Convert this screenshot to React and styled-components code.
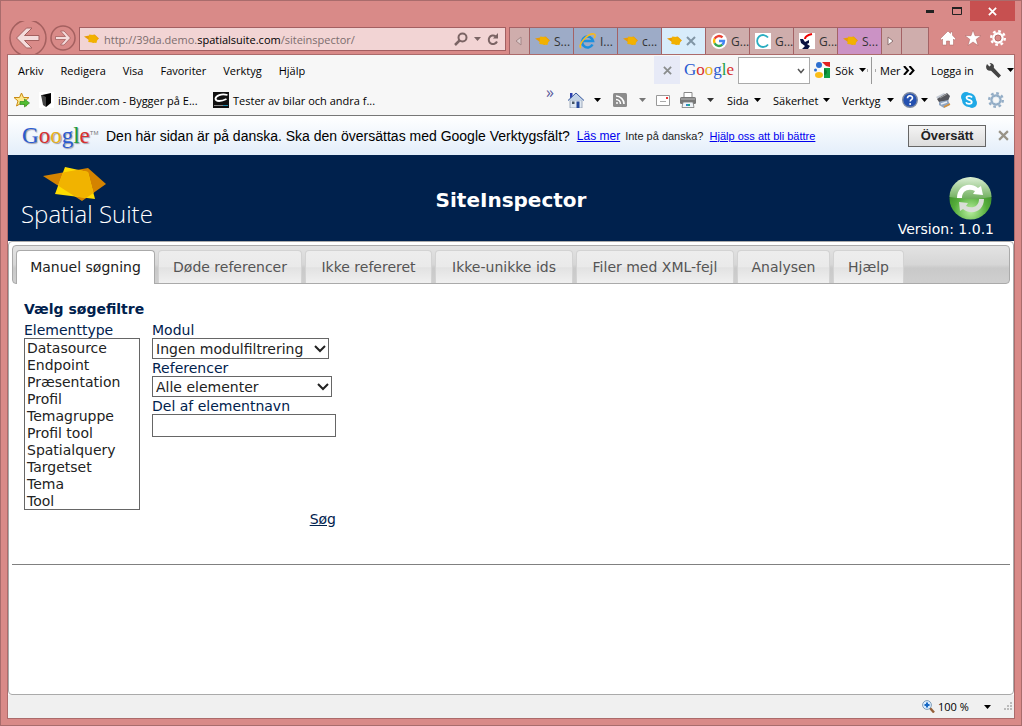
import React, { useState } from "react";
import styled, { createGlobalStyle, css } from "styled-components";

const GlobalStyle = createGlobalStyle`
  * {
    box-sizing: border-box;
  }

  body {
    margin: 0;
  }

  button,
  input,
  select {
    font: inherit;
    color: inherit;
    margin: 0;
  }

  svg {
    display: block;
    flex: none;
  }
`;

const uiFont = `"Open Sans", "Noto Sans", sans-serif`;
const pageFont = `"DejaVu Sans", sans-serif`;
const arial = `"Liberation Sans", Arial, sans-serif`;

const BrowserWindow = styled.div`
  display: flex;
  flex-direction: column;
  min-height: 100vh;
  border: 1px solid #a96c6c;
  background-color: #d98a88;
  font-family: ${uiFont};
  font-size: 11px;
  color: #000;
`;

const TitleBar = styled.div`
  display: flex;
  justify-content: flex-end;
  height: 20px;
  padding-right: 6px;
`;

const PlainButton = styled.button`
  display: flex;
  align-items: center;
  justify-content: center;
  flex: none;
  padding: 0;
  border: none;
  background: none;
  white-space: nowrap;
`;

const WindowButton = styled(PlainButton)`
  width: ${(props) => (props.$close ? 45 : 27)}px;
  background-color: ${(props) => (props.$close ? "#c75050" : "transparent")};
`;

const NavRow = styled.div`
  display: flex;
  align-items: flex-end;
  height: 33px;
  padding: 0 15px 0 8px;
  overflow: hidden;
`;

const HistoryButtons = styled.div`
  display: flex;
  align-items: center;
  gap: 3px;
  width: 70px;
  height: 33px;
`;

const AddressBar = styled.form`
  display: flex;
  align-items: center;
  flex: 1;
  min-width: 0;
  height: 24px;
  margin: 0 3px 3px 0;
  padding: 0 6px 0 4px;
  border: 1px solid #a35f61;
  background-color: #f2d4d4;
`;

const Address = styled.div`
  flex: 1;
  margin-left: 5px;
  font-size: 11px;
  color: #7c6d6d;
  white-space: nowrap;
  overflow: hidden;

  b {
    font-weight: 400;
    color: #000;
  }
`;

const AddressTools = styled.div`
  display: flex;
  align-items: center;
  gap: 6px;
`;

const TabStrip = styled.div`
  display: flex;
  height: 27px;
  border: 1px solid #a46265;
  border-bottom: none;
`;

const BrowserTab = styled.button`
  display: flex;
  align-items: center;
  gap: 4px;
  width: ${(props) => props.$width || 44}px;
  padding: 0 0 0 5px;
  border: none;
  border-right: 1px solid #a46265;
  background-color: ${(props) => props.$color || "#cfadac"};
  font-size: 12px;
  color: #333;
  white-space: nowrap;

  &:last-child {
    border-right: none;
  }
`;

const NavIcons = styled.div`
  display: flex;
  align-items: center;
  gap: 9px;
  height: 33px;
  margin-left: 11px;
`;

const Viewport = styled.div`
  display: flex;
  flex-direction: column;
  flex: 1;
  margin: 0 6px 6px 6px;
  border: 1px solid #ac6b6b;
  background-color: #fff;
`;

const BarRow = styled.div`
  display: flex;
  align-items: center;
  height: ${(props) => props.$height}px;
  padding-bottom: 2px;
  background-color: #f7f7f7;
`;

const MenuBar = styled.nav`
  display: flex;
  flex: 1;
  gap: 17px;
  padding-left: 10px;
`;

const Slot = styled.div`
  display: flex;
  align-items: center;
  justify-content: ${(props) => (props.$spread ? "space-between" : "flex-start")};
  flex: none;
  width: ${(props) => props.$width}px;
  white-space: nowrap;
`;

const CloseToolbar = styled(PlainButton)`
  width: 26px;
  height: 28px;
  margin-right: 4px;
  background-color: #e7eaf7;
`;

const SearchWrap = styled.div`
  position: relative;
  flex: none;
  width: 72px;
  margin-right: 4px;

  svg {
    position: absolute;
    top: 11px;
    right: 5px;
    pointer-events: none;
  }
`;

const SearchBox = styled.select`
  display: block;
  width: 100%;
  height: 27px;
  border: 1px solid #aaa;
  border-radius: 0;
  background-color: #fff;
  appearance: none;
`;

const Divider = styled.span`
  display: flex;
  align-items: center;
  justify-content: space-between;
  width: 9px;
  height: 27px;
  margin: 0 4px 0 1px;
  background: linear-gradient(#999, #999) center / 1px 100% no-repeat;

  &::before,
  &::after {
    content: "";
    width: 1px;
    height: 3px;
    background-color: #aaa;
  }
`;

const FavoriteLinks = styled.div`
  display: flex;
  align-items: center;
  flex: 1;
  padding-left: 6px;
`;

const FavoriteLink = styled.a`
  display: flex;
  align-items: center;
  gap: 4px;
  min-width: 165px;
  margin-left: 9px;
  color: #000;
  text-decoration: none;
  white-space: nowrap;
`;

const Chevrons = styled.span`
  align-self: flex-start;
  width: 22px;
  font-size: 16px;
  line-height: 10px;
  color: #5b5b9c;
`;

const GoogleWord = styled.span`
  flex: none;
  width: ${(props) => props.$width}px;
  font-family: "Liberation Serif", serif;
  font-size: ${(props) => props.$size}px;
  line-height: 26px;
  white-space: nowrap;
  ${(props) =>
    props.$shadow &&
    css`
      text-shadow: 1px 1px 1px #99a;
    `}

  sup {
    font-family: ${arial};
    font-size: 6px;
    line-height: 6px;
    color: #777;
    text-shadow: none;
    vertical-align: 8px;
  }
`;

const Letter = styled.span`
  color: ${(props) => props.$color};
`;

const TranslateBar = styled.div`
  display: flex;
  align-items: center;
  height: 40px;
  padding: 0 5px 0 14px;
  border-top: 1px solid #777;
  background: linear-gradient(#fff, #e3eefa);
  font-family: ${arial};
  font-size: 11px;
  color: #222;
  white-space: nowrap;
`;

const TranslateText = styled.span`
  margin-right: 7px;
  font-size: 14px;
  color: #000;
`;

const TranslateLink = styled.a`
  margin-right: 5px;
  font-size: ${(props) => props.$size}px;
  color: #00e;
`;

const TranslateButton = styled.button`
  width: 78px;
  height: 22px;
  margin: 0 12px 0 auto;
  padding: 0;
  border: 1px solid #666;
  background: linear-gradient(#f4f4f4, #dcdcdc);
  font-size: 13px;
  font-weight: 700;
  color: #222;
`;

const AppHeader = styled.header`
  display: grid;
  grid-template-columns: 1fr auto 1fr;
  align-items: center;
  height: 86px;
  background-color: #00214d;
  font-family: ${pageFont};
  color: #fff;
`;

const Logo = styled.div`
  padding: 0 0 4px 13px;
  font-family: "Open Sans", sans-serif;
  font-size: 24px;
  font-weight: 300;
  line-height: 24px;
  color: #fff;

  svg {
    margin-left: 22px;
  }
`;

const Title = styled.h1`
  margin: 0;
  padding-top: 3px;
  font-size: 20px;
  line-height: 24px;
`;

const Version = styled.div`
  display: flex;
  flex-direction: column;
  align-items: flex-end;
  padding: 17px 20px 0 0;
  font-size: 14px;
  line-height: 16px;

  button {
    margin: 0 2px 1px 0;
  }
`;

const Page = styled.main`
  display: flex;
  flex-direction: column;
  flex: 1;
  padding: 3px;
  border: 1px solid #aaa;
  border-radius: 4px;
  background-color: #fff;
  font-family: ${pageFont};
  font-size: 14px;
  color: #222;
`;

const Tabs = styled.div`
  display: flex;
  gap: 3px;
  height: 39px;
  padding: 4px 3px 0;
  border: 1px solid #aaa;
  border-radius: 4px;
  background: linear-gradient(#e3e3e3 0%, #d6d6d6 50%, #c9c9c9 60%, #cfcfcf 100%);
`;

const PageTab = styled.button`
  width: ${(props) => props.$width}px;
  padding: 0;
  border: 1px solid ${(props) => (props.$active ? "#aaa" : "#d3d3d3")};
  border-bottom: none;
  border-radius: 4px 4px 0 0;
  background: linear-gradient(#ededed 0%, #eaeaea 50%, #e2e2e2 52%, #f0f0f0 100%);
  color: #555;
  white-space: nowrap;

  ${(props) =>
    props.$active &&
    css`
      margin-bottom: -1px;
      padding-bottom: 1px;
      background: #fff;
      color: #212121;
    `}
`;

const FilterForm = styled.form`
  display: flex;
  flex-direction: column;
  width: 324px;
  padding: 15px 0 0 12px;
  color: #00214d;
`;

const Heading = styled.h2`
  margin: 0;
  font-size: 14px;
  line-height: 20px;
`;

const Columns = styled.div`
  display: flex;
  gap: 12px;
  padding-top: 2px;
`;

const Column = styled.div`
  display: flex;
  flex-direction: column;
  align-items: flex-start;
  flex: ${(props) => (props.$grow ? 1 : "none")};
`;

const FieldLabel = styled.label`
  height: 17px;
  line-height: 19px;
`;

const ListBox = styled.select`
  width: 116px;
  height: 172px;
  padding: 0;
  border: 1px solid #666;
  border-radius: 0;
  background-color: #fff;
  color: #222;
  overflow: hidden;

  option {
    height: 17px;
    min-height: 17px;
    padding: 1px 2px 0;
    line-height: 17px;
  }
`;

const SelectWrap = styled.div`
  position: relative;
  width: ${(props) => props.$width}px;

  svg {
    position: absolute;
    top: 7px;
    right: 3px;
    pointer-events: none;
  }
`;

const DropDown = styled.select`
  display: block;
  width: 100%;
  height: 21px;
  padding: 0 3px;
  border: 1px solid #666;
  border-radius: 0;
  background-color: #fff;
  color: #222;
  appearance: none;
`;

const TextInput = styled.input`
  width: 100%;
  height: 23px;
  padding: 0 3px;
  border: 1px solid #666;
`;

const SearchLink = styled.a`
  align-self: flex-end;
  line-height: 18px;
  color: #00214d;
`;

const Rule = styled.hr`
  width: 100%;
  margin: 36px 0 0;
  border: none;
  border-top: 1px solid #808080;
`;

const StatusBar = styled.footer`
  display: flex;
  align-items: center;
  justify-content: flex-end;
  height: 23px;
  padding-right: 1px;
  background-color: #f0f0f0;
`;

const Caret = ({ color = "#000" }) => (
  <svg width="7" height="4" viewBox="0 0 7 4">
    <path d="M0 0h7L3.500 4z" fill={color} />
  </svg>
);

const Cross = ({ size, color, weight = 2 }) => (
  <svg width={size} height={size} viewBox="0 0 10 10">
    <path d="M1 1l8 8M9 1L1 9" stroke={color} strokeWidth={weight} />
  </svg>
);

const SuiteIcon = () => (
  <svg width="15" height="10" viewBox="0 0 63 38">
    <path d="M0 9L45 0l18 17-24 19z" fill="#e89c08" />
    <path d="M22 0l23 3 13 14-6 19-34-4z" fill="#f2b100" />
  </svg>
);

// two overlapping sheets, the shared area in its own tone
const SuiteLogo = () => (
  <svg width="63" height="35" viewBox="0 0 63 35">
    <clipPath id="sheet">
      <path d="M0 9L45 1l18 16-24 17z" />
    </clipPath>
    <path d="M0 9L45 1l18 16-24 17z" fill="#d48300" />
    <path d="M22 0l23 5 7 27-40-5z" fill="#ffdc00" />
    <path d="M22 0l23 5 7 27-40-5z" fill="#f1b300" clipPath="url(#sheet)" />
  </svg>
);

const BackIcon = () => (
  <svg width="38" height="38" viewBox="0 0 38 38">
    <circle cx="19" cy="19" r="18" fill="none" stroke="#a4605f" strokeWidth="1.500" />
    <path
      d="M7.500 19L17.500 9h5.500l-7.500 7.500H30v5H15.500L23 29h-5.500z"
      fill="#f4dcdc"
      stroke="#a4605f"
    />
  </svg>
);

const ForwardIcon = () => (
  <svg width="26" height="26" viewBox="0 0 26 26">
    <circle cx="13" cy="13" r="12" fill="none" stroke="#a4605f" strokeWidth="1.500" />
    <path d="M20.500 13l-6.500-7h-3.500l5 5.500H5.500v3h10l-5 5.500H14z" fill="#f4dcdc" stroke="#a4605f" strokeWidth=".8" />
  </svg>
);

const GlassIcon = () => (
  <svg width="14" height="14" viewBox="0 0 14 14" fill="none" stroke="#7b6464">
    <circle cx="8.500" cy="5.500" r="4" strokeWidth="2" />
    <path d="M5.500 8.500L1 13" strokeWidth="2.500" />
  </svg>
);

const ReloadIcon = () => (
  <svg width="12" height="13" viewBox="0 0 12 13">
    <path d="M10 8.500A4.300 4.300 0 1 1 8.500 3.200" fill="none" stroke="#7b6464" strokeWidth="2" />
    <path d="M6 5.500h5V0z" fill="#7b6464" />
  </svg>
);

const ExplorerIcon = () => (
  <svg width="17" height="16" viewBox="0 0 17 16" fill="none">
    <path d="M13.500 11.500A5.500 5.500 0 1 1 14 8H4" stroke="#1d8fdd" strokeWidth="2.600" />
    <path d="M2 15C-2 12 9 0 15 1c2 .6 1 3 0 4" stroke="#f5b921" strokeWidth="1.600" />
  </svg>
);

const GoogleIcon = () => (
  <svg width="16" height="16" viewBox="0 0 16 16" fill="none" strokeWidth="2.400">
    <circle cx="8" cy="8" r="8" fill="#fff" />
    <path d="M11.500 4.300A5 5 0 0 0 3.600 5.800" stroke="#ea4335" />
    <path d="M3.600 5.800a5 5 0 0 0 0 4.500" stroke="#fbbc05" />
    <path d="M3.600 10.300a5 5 0 0 0 7.700 1.400" stroke="#34a853" />
    <path d="M11.300 11.700A5 5 0 0 0 13 8H8" stroke="#4285f4" />
  </svg>
);

const RingIcon = () => (
  <svg width="16" height="16" viewBox="0 0 16 16">
    <path d="M0 0h16v16H0z" fill="#fff" />
    <path d="M13 4.500a6 6 0 1 0 0 7" fill="none" stroke="#29adc0" strokeWidth="1.800" />
  </svg>
);

const FeatherIcon = () => (
  <svg width="16" height="16" viewBox="0 0 16 16">
    <path d="M0 0h16v16H0z" fill="#fff" />
    <path d="M1 6h3l2 3 4-2v3l-2 1 3 2-2 3H3l3-3-4-3z" fill="#0a1040" />
    <path d="M6 6c0-3 3-4 7-5" fill="none" stroke="#e00" strokeWidth="2" />
  </svg>
);

const HomeGlyph = () => (
  <svg width="16" height="16" viewBox="0 0 16 16">
    <path
      d="M8 1l2.500 2.400V2h2v3.300L16 9l-1.500 1-1-1v6h-4v-4h-3v4h-4V9l-1 1L0 9z"
      fill="#fff"
      stroke="#a8605f"
      strokeWidth=".5"
    />
  </svg>
);

const StarGlyph = () => (
  <svg width="16" height="16" viewBox="0 0 16 16">
    <path
      d="M8 0l2 5.700h6l-4.800 3.600L13 15.500 8 12l-5 3.500 1.800-6.200L0 5.700h6z"
      fill="#fff"
      stroke="#a8605f"
      strokeWidth=".5"
    />
  </svg>
);

const GearIcon = ({ color, outline }) => (
  <svg width="16" height="16" viewBox="0 0 16 16" fill="none" stroke={color}>
    <circle cx="8" cy="8" r="6.800" strokeWidth="2.400" strokeDasharray="2.700 2.640" />
    <circle cx="8" cy="8" r="4.500" strokeWidth="2.400" />
    <circle cx="8" cy="8" r="3" stroke={outline} strokeWidth=".7" />
  </svg>
);

const AddStarIcon = () => (
  <svg width="16" height="16" viewBox="0 0 16 16">
    <path d="M7.500 1l2 4.500H15l-4 3.500 1.500 5-5-3-5 3L4 9 0 5.500h5.500z" fill="#ffe88a" stroke="#c98a13" />
    <path d="M6 9.500h4.500V7l5 4-5 4v-2.500H6z" fill="#51bd31" stroke="#2f8d22" strokeWidth=".7" />
  </svg>
);

const BinderIcon = () => (
  <svg width="15" height="16" viewBox="0 0 15 16">
    <path d="M0 0h15v16H0z" fill="#fff" />
    <path d="M2 3h5v12L4 13z" fill="#444" />
    <path d="M3 3l9-2v10l-5 4V5z" fill="#000" />
  </svg>
);

const CarTestIcon = () => (
  <svg width="16" height="16" viewBox="0 0 16 16">
    <path d="M0 0h16v16H0z" fill="#111" />
    <path d="M14.500 3C8 1 3 4 2.500 6.500c0 3.500 6 3 11 .5" fill="none" stroke="#fff" strokeWidth="1.800" />
    <path d="M1 13.500h9" stroke="#8a8a8a" />
    <path d="M10 13.500h5" stroke="#28a" />
  </svg>
);

const HouseIcon = () => (
  <svg width="16" height="16" viewBox="0 0 16 16">
    <path d="M2 8h12v8H2z" fill="#dfe8f2" stroke="#8a9aae" strokeWidth=".8" />
    <path d="M2 1h2.500v5H2z" fill="#2b3fae" />
    <path d="M0 8.500L8 1l8 7.500" fill="#c3d3e6" stroke="#33559b" />
    <path d="M8.500 9.500h3V16h-3z" fill="#24489b" />
    <path d="M4 9.500h2.500V12H4z" fill="#456" />
  </svg>
);

const FeedIcon = () => (
  <svg width="14" height="14" viewBox="0 0 14 14" fill="none" stroke="#fff" strokeWidth="1.600">
    <rect width="14" height="14" rx="1.500" fill="#8c8c8c" stroke="none" />
    <path d="M3 6.500A4.500 4.500 0 0 1 7.500 11M3 3a8 8 0 0 1 8 8" />
    <circle cx="4" cy="10" r="1" fill="#fff" stroke="none" />
  </svg>
);

const MailIcon = () => (
  <svg width="14" height="11" viewBox="0 0 14 11">
    <path d="M.5.500h13v10H.5z" fill="#fff" stroke="#999" />
    <path d="M4 6.500h6" stroke="#aaa" />
    <path d="M10 2h2v2h-2z" fill="#e33" />
  </svg>
);

const PrinterIcon = () => (
  <svg width="16" height="16" viewBox="0 0 16 16">
    <path d="M4 .5h8V6H4z" fill="#fff" stroke="#888" />
    <rect y="5" width="16" height="7" rx="1.500" fill="#777" />
    <path d="M1 7h14" stroke="#bbb" />
    <path d="M3 10h10l1 5.500H2z" fill="#eef3f8" stroke="#777" strokeWidth=".8" />
    <path d="M6 12h2v2H6z" fill="#38c" />
    <path d="M8 12h2v2H8z" fill="#2a8" />
  </svg>
);

const HelpIcon = () => (
  <svg width="16" height="16" viewBox="0 0 16 16">
    <circle cx="8" cy="8" r="7.300" fill="#2350b0" stroke="#7b88a0" strokeWidth="1.400" />
    <path d="M5.500 6.300c0-3.300 5-3.300 5-.3 0 1.800-2.300 1.600-2.300 3.500" fill="none" stroke="#fff" strokeWidth="1.600" />
    <circle cx="8.100" cy="12" r="1" fill="#fff" />
  </svg>
);

const ScannerIcon = () => (
  <svg width="16" height="16" viewBox="0 0 16 16">
    <path d="M1 5l8-4 2 2-7 5z" fill="#c4cad3" />
    <path d="M2 7l10-6 3 3-2 5-9 1z" fill="#55565c" />
    <path d="M5 6l7-4" stroke="#999" />
    <path d="M4 10l9-2 2 5-6 3-5-3z" fill="#8fa4c0" />
    <path d="M6 12l6-2" stroke="#e8eef5" strokeWidth="1.500" />
    <path d="M9 15l6-3" stroke="#d6923a" strokeWidth="1.500" />
  </svg>
);

const SkypeIcon = () => (
  <svg width="16" height="16" viewBox="0 0 16 16">
    <circle cx="5" cy="5" r="5" fill="#1fa9e6" />
    <circle cx="11" cy="11" r="5" fill="#1fa9e6" />
    <circle cx="8" cy="8" r="7" fill="#1fa9e6" />
    <path
      d="M11 5.500C10 3.500 5.500 3.600 5.500 6c0 2.300 5.300 1.500 5.300 4 0 2.400-5 2.400-5.800.200"
      fill="none"
      stroke="#fff"
      strokeWidth="1.700"
    />
  </svg>
);

const SearchLogo = () => (
  <svg width="16" height="16" viewBox="0 0 16 16">
    <path d="M8 0h8v5l-4-1z" fill="#e02020" />
    <path d="M8 6h8v10H8z" fill="#12a044" />
    <path d="M6 6h4v10H7z" fill="#fff" />
    <circle cx="5" cy="3" r="3" fill="#2d6fd0" />
    <circle cx="1.500" cy="8" r="1.500" fill="#2d6fd0" />
    <ellipse cx="5" cy="13" rx="4" ry="3" fill="#fbbd17" />
    <path d="M10 7c4 0 4 6 0 6" fill="#0b7a31" />
  </svg>
);

const WrenchIcon = () => (
  <svg width="15" height="15" viewBox="0 0 15 15">
    <path
      d="M1 1l2.500 2.500L5 2 3.500 0C7 0 8.500 2 7.800 4.800L15 12.500 12.500 15 5 7.700C2 8.500-.5 6 .2 3z"
      fill="#444"
    />
  </svg>
);

const RefreshIcon = () => (
  <svg width="43" height="43" viewBox="0 0 43 43">
    <defs>
      <radialGradient id="ball" cx="50%" cy="80%" r="65%">
        <stop offset="0" stopColor="#b9f0a0" />
        <stop offset=".6" stopColor="#55ad3b" />
        <stop offset="1" stopColor="#3c8c28" />
      </radialGradient>
      <linearGradient id="gloss" x2="0" y2="1">
        <stop offset="0" stopColor="#dcefd5" />
        <stop offset="1" stopColor="#6fae5c" />
      </linearGradient>
    </defs>
    <circle cx="21.500" cy="21.500" r="21" fill="url(#ball)" />
    <path d="M.5 20a21 20 0 0 1 42 0Q21 24 .5 20z" fill="url(#gloss)" />
    <path d="M8 21C8 9 20 4 29 11l3-2 2 9-10-1 2-3c-6-3-13-1-13 7z" fill="#fff" />
    <path d="M35 22c0 12-12 17-21 10l-3 2-1-9 9 1-2 3c6 3 13 1 13-7z" fill="#d9ded7" />
  </svg>
);

const ZoomIcon = () => (
  <svg width="13" height="13" viewBox="0 0 13 13">
    <path d="M8 8l4 4.500" stroke="#94603a" strokeWidth="2.400" />
    <circle cx="5" cy="5" r="4.400" fill="#d8ecff" stroke="#7f9db8" />
    <path d="M5 2.500v5M2.500 5h5" stroke="#1768c4" strokeWidth="2" />
  </svg>
);

const Grip = () => (
  <svg width="9" height="9" viewBox="0 0 9 9" fill="#bbb">
    <path d="M6 0h2v2H6zM3 3h2v2H3zM6 3h2v2H6zM0 6h2v2H0zM3 6h2v2H3zM6 6h2v2H6z" />
  </svg>
);

const Google = (props) => (
  <GoogleWord {...props}>
    {["#2a5bd0", "#d8302f", "#e8b21a", "#2a5bd0", "#1c9c3c", "#d8302f"].map((color, i) => (
      <Letter key={i} $color={color}>
        {"Google"[i]}
      </Letter>
    ))}
    {props.$shadow && <sup>TM</sup>}
  </GoogleWord>
);

const SelectArrow = () => (
  <svg width="12" height="8" viewBox="0 0 12 8">
    <path d="M1 1l5 5 5-5" fill="none" stroke="#222" strokeWidth="2" />
  </svg>
);

const browserTabs = [
  { label: "S...", icon: <SuiteIcon />, color: "#9dabc7" },
  { label: "I...", icon: <ExplorerIcon />, color: "#9dabc7" },
  { label: "c...", icon: <SuiteIcon />, color: "#9dabc7" },
  { icon: <SuiteIcon />, color: "#d8ecfb", active: true },
  { label: "G...", icon: <GoogleIcon /> },
  { label: "G...", icon: <RingIcon /> },
  { label: "G...", icon: <FeatherIcon /> },
  { label: "S...", icon: <SuiteIcon />, color: "#cb92c5" },
];

const menuItems = ["Arkiv", "Redigera", "Visa", "Favoriter", "Verktyg", "Hjälp"];

const pageTabs = [
  { label: "Manuel søgning", width: 139 },
  { label: "Døde referencer", width: 144 },
  { label: "Ikke refereret", width: 127 },
  { label: "Ikke-unikke ids", width: 138 },
  { label: "Filer med XML-fejl", width: 158 },
  { label: "Analysen", width: 93 },
  { label: "Hjælp", width: 71 },
];

const elementTypes = [
  "Datasource",
  "Endpoint",
  "Præsentation",
  "Profil",
  "Temagruppe",
  "Profil tool",
  "Spatialquery",
  "Targetset",
  "Tema",
  "Tool",
];

const App = () => {
  const [activeTab, setActiveTab] = useState(pageTabs[0].label);
  const [name, setName] = useState("");

  return (
    <BrowserWindow>
      <GlobalStyle />
      <TitleBar>
        <WindowButton aria-label="Minimize">
          <svg width="8" height="3">
            <path d="M0 0h8v3H0z" fill="#222" />
          </svg>
        </WindowButton>
        <WindowButton aria-label="Maximize">
          <svg width="10" height="8">
            <path d="M.5 1h9v6.500h-9z" fill="none" stroke="#222" />
            <path d="M0 0h10v2H0z" fill="#222" />
          </svg>
        </WindowButton>
        <WindowButton $close aria-label="Close">
          <Cross size={9} color="#fff" />
        </WindowButton>
      </TitleBar>

      <NavRow>
        <HistoryButtons>
          <PlainButton aria-label="Back">
            <BackIcon />
          </PlainButton>
          <PlainButton aria-label="Forward">
            <ForwardIcon />
          </PlainButton>
        </HistoryButtons>
        <AddressBar>
          <SuiteIcon />
          <Address>
            http://39da.demo.<b>spatialsuite.com</b>/siteinspector/
          </Address>
          <AddressTools>
            <GlassIcon />
            <Caret color="#7b6464" />
            <ReloadIcon />
          </AddressTools>
        </AddressBar>
        <TabStrip>
          <BrowserTab $width={20} aria-label="Scroll left">
            <svg width="7" height="10">
              <path d="M6 1v8L1 5z" fill="#dccaca" stroke="#a58888" />
            </svg>
          </BrowserTab>
          {browserTabs.map((tab, i) => (
            <BrowserTab key={i} $color={tab.color}>
              {tab.icon}
              {tab.active ? <Cross size={10} color="#8095a5" /> : tab.label}
            </BrowserTab>
          ))}
          <BrowserTab $width={20} aria-label="Scroll right">
            <svg width="7" height="10">
              <path d="M1 1v8l5-4z" fill="#fff" stroke="#8d7070" />
            </svg>
          </BrowserTab>
          <BrowserTab $width={26} aria-label="New tab" />
        </TabStrip>
        <NavIcons>
          <HomeGlyph />
          <StarGlyph />
          <GearIcon color="#fff" outline="#a8605f" />
        </NavIcons>
      </NavRow>

      <Viewport>
        <BarRow $height={32}>
          <MenuBar>
            {menuItems.map((item) => (
              <PlainButton key={item}>{item}</PlainButton>
            ))}
          </MenuBar>
          <CloseToolbar aria-label="Close toolbar">
            <Cross size={9} color="#8a8d8d" />
          </CloseToolbar>
          <Google $width={54} $size={17} />
          <SearchWrap>
            <SearchBox aria-label="Google">
              <option></option>
            </SearchBox>
            <svg width="8" height="6" viewBox="0 0 8 6">
              <path d="M1 1l3 3.500L7 1" fill="none" stroke="#555" strokeWidth="1.500" />
            </svg>
          </SearchWrap>
          <Slot $width={52} $spread>
            <SearchLogo />
            <span>Sök</span>
            <Caret />
          </Slot>
          <Divider />
          <Slot $width={51}>
            Mer&nbsp;
            <svg width="12" height="9" viewBox="0 0 12 9">
              <path d="M1 0l4 4.500L1 9M6.500 0l4 4.500-4 4.500" fill="none" stroke="#000" strokeWidth="2" />
            </svg>
          </Slot>
          <Slot $width={55}>Logga in</Slot>
          <WrenchIcon />
          <Slot $width={13}>
            &nbsp;&nbsp;
            <Caret />
          </Slot>
        </BarRow>

        <BarRow $height={28}>
          <FavoriteLinks>
            <AddStarIcon />
            <FavoriteLink href="#ibinder">
              <BinderIcon />
              iBinder.com - Bygger på E...
            </FavoriteLink>
            <FavoriteLink href="#tester">
              <CarTestIcon />
              Tester av bilar och andra f...
            </FavoriteLink>
          </FavoriteLinks>
          <Chevrons>»</Chevrons>
          <Slot $width={33} $spread>
            <HouseIcon />
            <Caret />
          </Slot>
          <Slot $width={45} $spread>
            <span />
            <FeedIcon />
            <Caret color="#777" />
          </Slot>
          <Slot $width={34} $spread>
            <span />
            <MailIcon />
            <span />
          </Slot>
          <Slot $width={47}>
            <PrinterIcon />
            <Slot $width={18} $spread>
              <span />
              <Caret color="#333" />
            </Slot>
          </Slot>
          <Slot $width={34} $spread>
            Sida <Caret />
          </Slot>
          <Slot $width={12} />
          <Slot $width={57} $spread>
            Säkerhet <Caret />
          </Slot>
          <Slot $width={12} />
          <Slot $width={52} $spread>
            Verktyg <Caret />
          </Slot>
          <Slot $width={8} />
          <Slot $width={33}>
            <HelpIcon />
            &nbsp;
            <Caret />
          </Slot>
          <Slot $width={79} $spread>
            <ScannerIcon />
            <SkypeIcon />
            <GearIcon color="#93adc6" outline="#dfe9f2" />
            <span />
          </Slot>
        </BarRow>

        <TranslateBar>
          <Google $width={84} $size={23} $shadow />
          <TranslateText>
            Den här sidan är på danska. Ska den översättas med Google Verktygsfält?
          </TranslateText>
          <TranslateLink href="#more" $size={12}>
            Läs mer
          </TranslateLink>
          Inte på danska?&nbsp;&nbsp;
          <TranslateLink href="#improve" $size={11}>
            Hjälp oss att bli bättre
          </TranslateLink>
          <TranslateButton>Översätt</TranslateButton>
          <PlainButton aria-label="Dismiss">
            <Cross size={11} color="#999488" />
          </PlainButton>
        </TranslateBar>

        <AppHeader>
          <Logo>
            <SuiteLogo />
            Spatial Suite
          </Logo>
          <Title>SiteInspector</Title>
          <Version>
            <PlainButton aria-label="Refresh">
              <RefreshIcon />
            </PlainButton>
            Version: 1.0.1
          </Version>
        </AppHeader>

        <Page>
          <Tabs role="tablist">
            {pageTabs.map((tab) => (
              <PageTab
                key={tab.label}
                role="tab"
                aria-selected={tab.label === activeTab}
                $active={tab.label === activeTab}
                $width={tab.width}
                onClick={() => setActiveTab(tab.label)}
              >
                {tab.label}
              </PageTab>
            ))}
          </Tabs>
          <FilterForm>
            <Heading>Vælg søgefiltre</Heading>
            <Columns>
              <Column>
                <FieldLabel htmlFor="elementtype">Elementtype</FieldLabel>
                <ListBox id="elementtype" size={10} multiple>
                  {elementTypes.map((type) => (
                    <option key={type}>{type}</option>
                  ))}
                </ListBox>
              </Column>
              <Column $grow>
                <FieldLabel htmlFor="modul">Modul</FieldLabel>
                <SelectWrap $width={177}>
                  <DropDown id="modul">
                    <option>Ingen modulfiltrering</option>
                  </DropDown>
                  <SelectArrow />
                </SelectWrap>
                <FieldLabel htmlFor="referencer">Referencer</FieldLabel>
                <SelectWrap $width={180}>
                  <DropDown id="referencer">
                    <option>Alle elementer</option>
                  </DropDown>
                  <SelectArrow />
                </SelectWrap>
                <FieldLabel htmlFor="elementnavn">Del af elementnavn</FieldLabel>
                <TextInput
                  id="elementnavn"
                  value={name}
                  onChange={(event) => setName(event.target.value)}
                />
              </Column>
            </Columns>
            <SearchLink href="#search">Søg</SearchLink>
          </FilterForm>
          <Rule />
        </Page>

        <StatusBar>
          <ZoomIcon />
          &nbsp;
          <Slot $width={46}>100 %</Slot>
          <Slot $width={20}>
            <Caret />
          </Slot>
          <Grip />
        </StatusBar>
      </Viewport>
    </BrowserWindow>
  );
};

export default App;
